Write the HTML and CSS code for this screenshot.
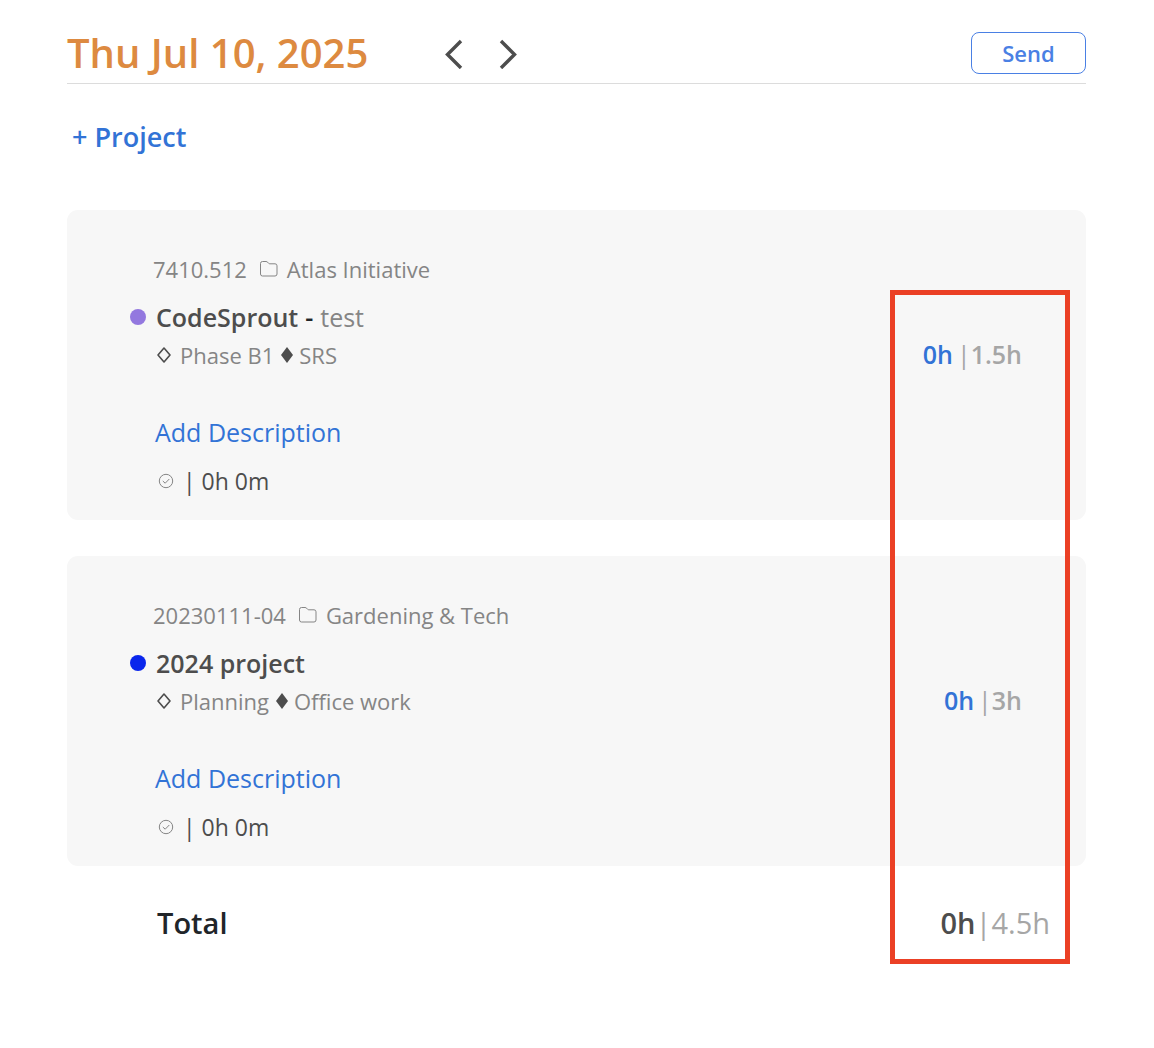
FILE: index.html
```html
<!DOCTYPE html>
<html lang="en">
<head>
<meta charset="utf-8">
<meta name="viewport" content="width=device-width, initial-scale=1">
<title>Daily timesheet</title>
<link rel="stylesheet" href="styles.css">
</head>
<body>
<main class="page">
  <header class="topbar">
    <h1 class="date">Thu Jul 10, 2025</h1>
    <nav class="day-nav" aria-label="Change day">
      <button class="icon-btn" type="button" aria-label="Previous day">
        <svg width="20" height="32" viewBox="0 0 20 32"><path stroke-width="3.4" d="M17 4 3.500 17.500 17 31"/></svg>
      </button>
      <button class="icon-btn" type="button" aria-label="Next day">
        <svg width="20" height="32" viewBox="0 0 20 32"><path stroke-width="3.4" d="M3 4 16.500 17.500 3 31"/></svg>
      </button>
    </nav>
    <button class="send" type="button">Send</button>
  </header>

  <button class="add-project" type="button">+ Project</button>

  <section class="sheet">
    <article class="card">
      <div class="details">
        <p class="meta">
          <span>7410.512</span>
          <svg class="folder" width="20" height="18" viewBox="0 0 20 18"><path d="M1.500 14V3.500a2 2 0 0 1 2-2H7c.8 0 1.200.3 1.700.8l.8.9c.4.4.8.6 1.400.6H16a2 2 0 0 1 2 2V14a2 2 0 0 1-2 2H3.500a2 2 0 0 1-2-2Z"/></svg>
          <span>Atlas Initiative</span>
        </p>
        <h2 class="name"><span class="dot dot-violet"></span><span class="title"><span>CodeSprout</span> <span class="dash">-</span> <span class="task">test</span></span></h2>
        <p class="tags">
          <svg class="gem" width="16" height="18" viewBox="0 0 16 18"><path stroke-width="1.6" d="M8 2 14 9 8 16 2 9Z"/></svg>
          <span class="phase">Phase B1</span>
          <svg class="gem-solid" width="12" height="18" viewBox="0 0 12 18"><path d="M6 1 12 9 6 17 0 9Z"/></svg>
          <span>SRS</span>
        </p>
        <a class="describe" href="#">Add Description</a>
        <p class="logged">
          <svg class="check" width="16" height="16" viewBox="0 0 16 16"><circle cx="8" cy="8" r="6.700"/><path d="M4.800 8 7.200 10.200 11.300 6"/></svg>
          <span>| 0h 0m</span>
        </p>
      </div>
      <p class="hours"><b>0h</b><span class="bar">|</span><span>1.5h</span></p>
    </article>

    <article class="card">
      <div class="details">
        <p class="meta">
          <span>20230111-04</span>
          <svg class="folder" width="20" height="18" viewBox="0 0 20 18"><path d="M1.500 14V3.500a2 2 0 0 1 2-2H7c.8 0 1.200.3 1.700.8l.8.9c.4.4.8.6 1.400.6H16a2 2 0 0 1 2 2V14a2 2 0 0 1-2 2H3.500a2 2 0 0 1-2-2Z"/></svg>
          <span>Gardening &amp; Tech</span>
        </p>
        <h2 class="name"><span class="dot dot-blue"></span><span class="title">2024 project</span></h2>
        <p class="tags">
          <svg class="gem" width="16" height="18" viewBox="0 0 16 18"><path stroke-width="1.6" d="M8 2 14 9 8 16 2 9Z"/></svg>
          <span class="phase">Planning</span>
          <svg class="gem-solid" width="12" height="18" viewBox="0 0 12 18"><path d="M6 1 12 9 6 17 0 9Z"/></svg>
          <span>Office work</span>
        </p>
        <a class="describe" href="#">Add Description</a>
        <p class="logged">
          <svg class="check" width="16" height="16" viewBox="0 0 16 16"><circle cx="8" cy="8" r="6.700"/><path d="M4.800 8 7.200 10.200 11.300 6"/></svg>
          <span>| 0h 0m</span>
        </p>
      </div>
      <p class="hours"><b>0h</b><span class="bar">|</span><span>3h</span></p>
    </article>

    <footer class="total">
      <span class="total-label">Total</span>
      <p class="total-hours"><b>0h</b><span>|4.5h</span></p>
    </footer>

    <div class="highlight"></div>
  </section>
</main>
</body>
</html>
```
FILE: styles.css
```css
* {
  box-sizing: border-box;
}

body {
  margin: 0;
  background: #fff;
  color: #4d4d4d;
  font-family: "Open Sans", "Noto Sans", sans-serif;
}

h1,
h2,
p {
  margin: 0;
}

button {
  padding: 0;
  border: 0;
  background: none;
  font-family: inherit;
  cursor: pointer;
}

svg {
  display: block;
  flex: none;
  fill: none;
}

.page {
  padding: 24px 68px 48px 67px;
}

.topbar {
  display: flex;
  align-items: center;
  height: 60px;
  padding-bottom: 1px;
  border-bottom: 1px solid #dcdcdc;
}

.date {
  color: #dd8a40;
  font-size: 40px;
  font-weight: 600;
  line-height: 60px;
}

.day-nav {
  display: flex;
  gap: 34px;
  margin-left: 76px;
}

.icon-btn svg {
  stroke: #4d4d4d;
}

.send {
  width: 115px;
  height: 42px;
  margin-left: auto;
  border: 1px solid #4a80e4;
  border-radius: 8px;
  color: #4a80e4;
  font-size: 22px;
  font-weight: 600;
  line-height: 38px;
}

.add-project {
  display: block;
  margin: 35px 0 0 5px;
  color: #3273d6;
  font-size: 27px;
  font-weight: 600;
  line-height: 36px;
}

.sheet {
  position: relative;
  display: flex;
  flex-direction: column;
  gap: 36px;
  margin-top: 55px;
}

.card {
  display: flex;
  align-items: center;
  justify-content: space-between;
  padding: 44px 64px 21px 63px;
  border-radius: 11px;
  background: #f7f7f7;
}

.details {
  display: flex;
  flex-direction: column;
  align-items: flex-start;
}

.meta,
.tags,
.name,
.logged {
  display: flex;
  align-items: center;
}

.meta,
.tags {
  color: #858585;
  font-size: 22px;
  line-height: 30px;
}

.meta {
  padding-left: 23px;
}

.folder {
  margin: 0 8px 0 12px;
  stroke: #858585;
  stroke-width: 1;
}

.name {
  gap: 10px;
  margin-top: 15px;
  font-size: 25px;
  font-weight: 600;
  line-height: 36px;
}

.title {
  display: flex;
  gap: 7px;
}

.dot {
  width: 16px;
  height: 16px;
  border-radius: 50%;
}

.dot-violet {
  background: #9378df;
}

.dot-blue {
  background: #0a26ec;
}

.dash {
  color: #212529;
}

.task {
  color: #858585;
  font-weight: 400;
}

.tags {
  margin-top: 5px;
  padding-left: 26px;
}

.gem {
  margin-right: 8px;
  stroke: #4d4d4d;
  stroke-linejoin: round;
}

.gem-solid {
  margin: 0 6px 0 7px;
  fill: #4d4d4d;
}

.describe {
  margin: 44px 0 0 25px;
  color: #3273d6;
  font-size: 25px;
  line-height: 36px;
  text-decoration: none;
}

.logged {
  gap: 9px;
  margin-top: 13px;
  padding-left: 28px;
  font-size: 23px;
  line-height: 36px;
}

.check {
  stroke: #858585;
  stroke-width: 1;
}

.hours {
  display: flex;
  padding-bottom: 46px;
  color: #a6a6a6;
  font-size: 25px;
  font-weight: 600;
  line-height: 36px;
}

.hours b {
  color: #3273d6;
  font-weight: 600;
}

.bar {
  margin-left: 4px;
  font-weight: 400;
}

.total {
  display: flex;
  justify-content: space-between;
  padding: 0 36px 20px 90px;
  font-size: 29px;
  line-height: 42px;
}

.total-label {
  color: #212529;
  font-weight: 600;
}

.total-hours {
  color: #a6a6a6;
}

.total-hours b {
  color: #4d4d4d;
  font-weight: 600;
}

/* Outline round the logged and planned hours */
.highlight {
  position: absolute;
  top: 80px;
  right: 16px;
  bottom: 0;
  width: 180px;
  border: 5px solid #eb4025;
  pointer-events: none;
}
```
